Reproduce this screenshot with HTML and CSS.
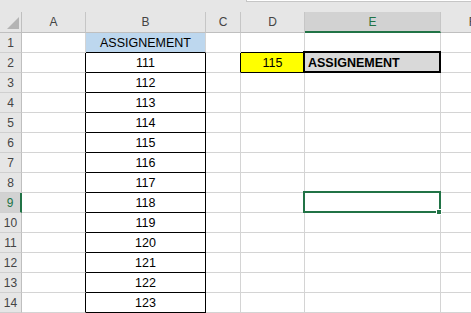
FILE: index.html
```html
<!DOCTYPE html>
<html lang="en">
  <head>
    <meta charset="UTF-8" />
    <title>Sheet1</title>
    <link rel="stylesheet" href="styles.css">
  </head>
  <body>
    <div class="topbar"><div class="formula"></div></div>
    <div class="sheet">
      <div class="corner"><span class="tri"></span></div>
      <div class="col">A</div><div class="col">B</div><div class="col">C</div><div class="col">D</div><div class="col sel">E</div><div class="col">F</div>

      <div class="rh">1</div><div></div><div class="title">ASSIGNEMENT</div><div></div><div class="above"></div><div></div><div></div>
      <div class="rh">2</div><div class="edge"></div><div class="num">111</div><div class="edge"></div><div class="hit">115</div><div class="found">ASSIGNEMENT</div><div></div>
      <div class="rh">3</div><div class="edge"></div><div class="num">112</div><div></div><div></div><div></div><div></div>
      <div class="rh">4</div><div class="edge"></div><div class="num">113</div><div></div><div></div><div></div><div></div>
      <div class="rh">5</div><div class="edge"></div><div class="num">114</div><div></div><div></div><div></div><div></div>
      <div class="rh">6</div><div class="edge"></div><div class="num">115</div><div></div><div></div><div></div><div></div>
      <div class="rh">7</div><div class="edge"></div><div class="num">116</div><div></div><div></div><div></div><div></div>
      <div class="rh">8</div><div class="edge"></div><div class="num">117</div><div></div><div></div><div></div><div></div>
      <div class="rh sel">9</div><div class="edge"></div><div class="num">118</div><div></div><div></div><div class="active"><span class="handle"></span></div><div></div>
      <div class="rh">10</div><div class="edge"></div><div class="num">119</div><div></div><div></div><div></div><div></div>
      <div class="rh">11</div><div class="edge"></div><div class="num">120</div><div></div><div></div><div></div><div></div>
      <div class="rh">12</div><div class="edge"></div><div class="num">121</div><div></div><div></div><div></div><div></div>
      <div class="rh">13</div><div class="edge"></div><div class="num">122</div><div></div><div></div><div></div><div></div>
      <div class="rh">14</div><div class="edge"></div><div class="num">123</div><div></div><div></div><div></div><div></div>
    </div>
  </body>
</html>
```

FILE: styles.css
```css
body {
  margin: 0;
  overflow: hidden;
  font-family: "Liberation Sans", Arial, sans-serif;
  background-color: #fff;
  color: #000;
}
.topbar {
  height: 12px;
  background-color: #e6e6e6;
}
.formula {
  margin-left: 246px;
  height: 2px;
  box-sizing: border-box;
  background-color: #fff;
  border-left: 1px solid #c6c6c6;
  border-bottom: 1px solid #c6c6c6;
}
.sheet {
  display: grid;
  grid-template-columns: 22px 64px 120px 35px 64px 136px 64px;
  grid-template-rows: 21px;
  grid-auto-rows: 20px;
}
.sheet > div {
  box-sizing: border-box;
  display: flex;
  align-items: center;
  border-right: 1px solid #d4d4d4;
  border-bottom: 1px solid #d4d4d4;
  font-size: 12.5px;
}
.sheet .corner {
  background-color: #e6e6e6;
  border-color: #bfbfbf;
  justify-content: flex-end;
  align-items: flex-end;
  padding: 0 2px 3px 0;
}
.tri {
  width: 0;
  height: 0;
  border-left: 12px solid transparent;
  border-bottom: 12px solid #b4b4b4;
}
.sheet .col {
  background-color: #e6e6e6;
  border-color: #c6c6c6;
  border-bottom-color: #bfbfbf;
  justify-content: center;
  font-size: 12px;
  color: #444;
}
.sheet .rh {
  background-color: #e6e6e6;
  border-right-color: #bfbfbf;
  border-bottom-color: #cfcfcf;
  justify-content: center;
  font-size: 12px;
  color: #444;
}
.sheet .col.sel {
  background-color: #d2d2d2;
  border-bottom: 2px solid #217346;
  color: #217346;
}
.sheet .rh.sel {
  background-color: #d2d2d2;
  border-right: 2px solid #217346;
  color: #217346;
}
.sheet .edge {
  border-right-color: #000;
}
.sheet .above {
  border-bottom-color: #000;
}
.sheet .title {
  background-color: #bdd7ee;
  border-bottom-color: #000;
  justify-content: center;
}
.sheet .num {
  border-right-color: #000;
  border-bottom-color: #000;
  justify-content: center;
}
.sheet .hit {
  background-color: #ffff00;
  border-bottom-color: #000;
  justify-content: center;
}
.sheet .found {
  position: relative;
  background-color: #d9d9d9;
  font-weight: bold;
  padding-left: 3px;
}
.found::after,
.active::after {
  content: "";
  position: absolute;
  top: -2px;
  left: -2px;
  right: -1px;
  bottom: -1px;
  border: 2px solid #000;
  z-index: 1;
}
.sheet .active {
  position: relative;
}
.active::after {
  border-color: #217346;
}
.handle {
  position: absolute;
  right: -2px;
  bottom: -3px;
  width: 4px;
  height: 4px;
  background-color: #217346;
  border: 1px solid #fff;
  z-index: 2;
}
```
